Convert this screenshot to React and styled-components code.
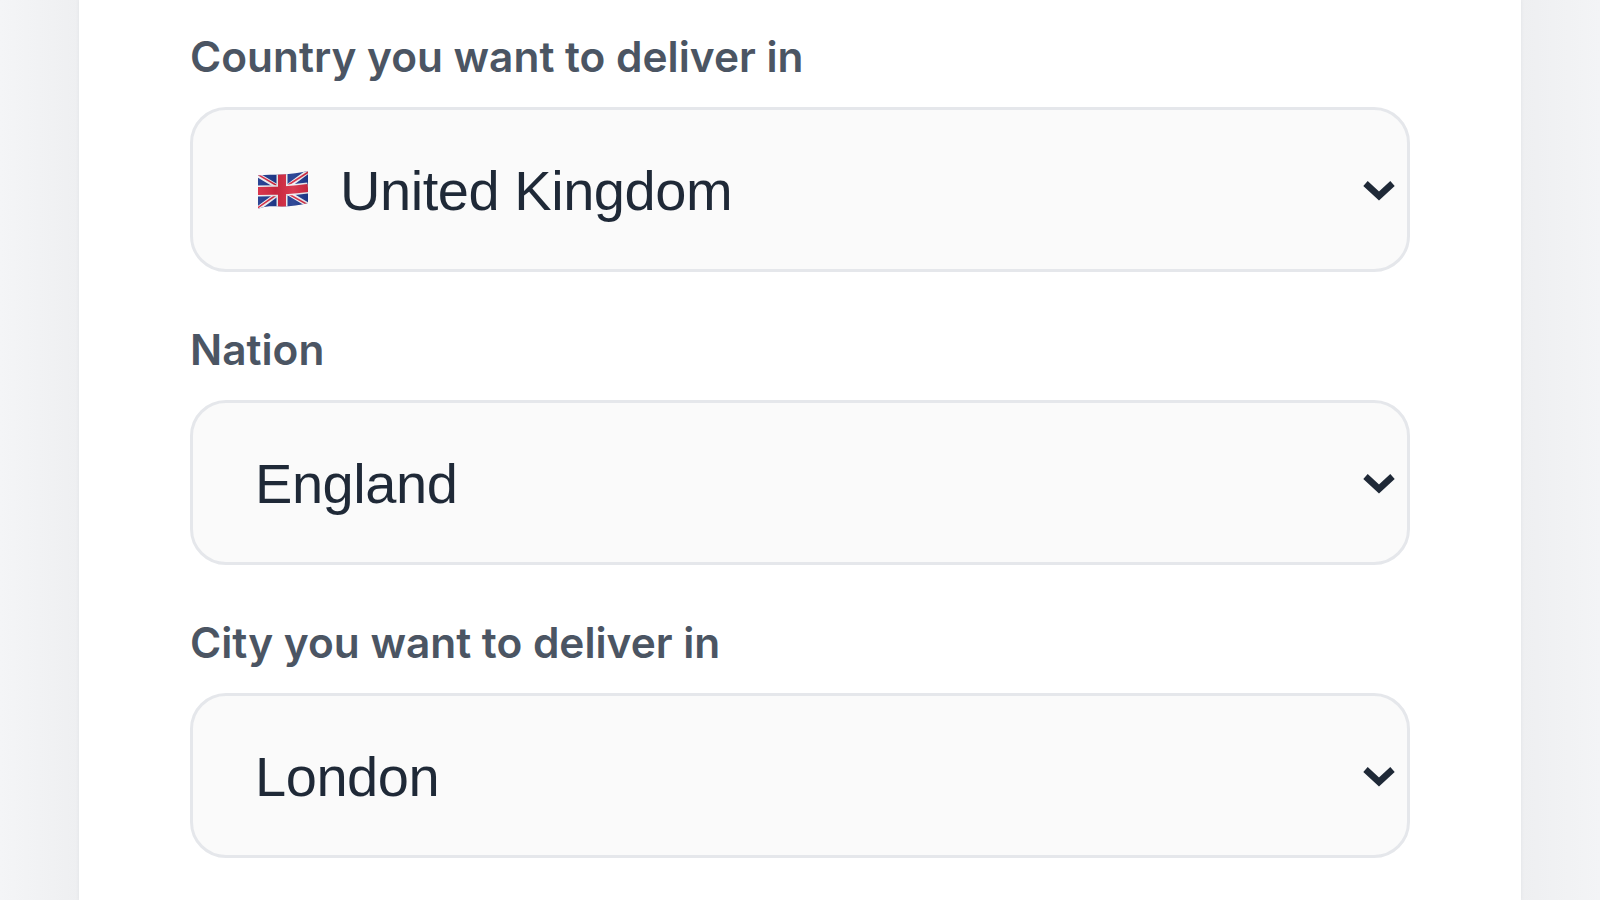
import React from 'react'
import styled, { createGlobalStyle } from 'styled-components'

const GlobalStyle = createGlobalStyle`
  html, body {
    margin: 0;
    height: 100%;
    overflow: hidden;
  }
  #root {
    height: 100%;
  }
`

const Page = styled.div`
  height: 900px;
  padding: 0 79px;
  box-sizing: border-box;
  background: linear-gradient(90deg, #f4f5f7 0, #eeeff1 79px, #eeeff1 1521px, #f3f4f6 1600px);
`

const Card = styled.main`
  height: 100%;
  box-sizing: border-box;
  padding: 30px 111px 0;
  background-color: #ffffff;
  box-shadow: 0 0 3px rgba(120, 130, 150, 0.12);
  display: flex;
  flex-direction: column;
  gap: 51px;
`

const Field = styled.section`
  display: flex;
  flex-direction: column;
  gap: 23px;
`

const Label = styled.label`
  font-family: "Inter", "Liberation Sans", sans-serif;
  font-size: 42.4px;
  line-height: 54px;
  font-weight: 600;
  color: #4b5563;
`

const SelectBox = styled.div`
  height: 165px;
  box-sizing: border-box;
  border: 3px solid #e5e7eb;
  border-radius: 36px;
  background-color: #fafafa;
  padding: 0 11px 0 62px;
  display: flex;
  align-items: center;
  color: #1f2937;
`

const Flag = styled.svg`
  width: 50px;
  height: 38px;
  flex: none;
  margin: 0 32px 0 3px;
`

const Value = styled.span`
  flex: 1;
  padding-top: 2px;
  font-family: "Liberation Sans", Arial, sans-serif;
  font-size: 56px;
  line-height: 64px;
  letter-spacing: -0.45px;
`

const Chevron = styled.svg`
  width: 34px;
  height: 24px;
  flex: none;
`

const UkFlag = () => (
  <Flag viewBox="0 0 50 38">
    <defs>
      <clipPath id="flag-wave">
        <path d="M0 4.5C8 3.5 16 4 24 3.6C33 3.2 42 1.6 50 0V32C42 34 33 35.5 24 35.5C16 35.5 8 34.5 0 38Z" />
      </clipPath>
      <linearGradient id="flag-shade" x1="0" y1="0" x2="1" y2="0">
        <stop offset="0" stopColor="#ffffff" stopOpacity="0.06" />
        <stop offset="0.35" stopColor="#000000" stopOpacity="0.08" />
        <stop offset="0.7" stopColor="#ffffff" stopOpacity="0.08" />
        <stop offset="1" stopColor="#000000" stopOpacity="0.08" />
      </linearGradient>
    </defs>
    <g clipPath="url(#flag-wave)">
      <rect width="50" height="38" fill="#1f3a8f" />
      <path d="M-2 3L52 35M52 -1L-2 39" stroke="#f1f1f4" strokeWidth="4.5" />
      <path d="M-2 2.5L23 17M52 0L27 16M-2 38L21 22M52 35L27 21" stroke="#d62a42" strokeWidth="1.6" />
      <path d="M24 0V38M0 20C16 20 33 19.5 50 17" stroke="#f1f1f4" strokeWidth="11" fill="none" />
      <path d="M24 0V38M0 20C16 20 33 19.5 50 17" stroke="#d62a42" strokeWidth="8" fill="none" />
      <rect width="50" height="38" fill="url(#flag-shade)" />
    </g>
  </Flag>
)

const fields = [
  { label: 'Country you want to deliver in', value: 'United Kingdom', flag: true },
  { label: 'Nation', value: 'England' },
  { label: 'City you want to deliver in', value: 'London' },
]

export default function App() {
  return (
    <>
      <GlobalStyle />
      <Page>
        <Card>
          {fields.map((f) => (
            <Field key={f.label}>
              <Label>{f.label}</Label>
              <SelectBox>
                {f.flag && <UkFlag />}
                <Value>{f.value}</Value>
                <Chevron viewBox="0 0 34 24">
                  <path d="M3.5 5.5L17 18L30.5 5.5" fill="none" stroke="#1f2937" strokeWidth="6.5" />
                </Chevron>
              </SelectBox>
            </Field>
          ))}
        </Card>
      </Page>
    </>
  )
}
